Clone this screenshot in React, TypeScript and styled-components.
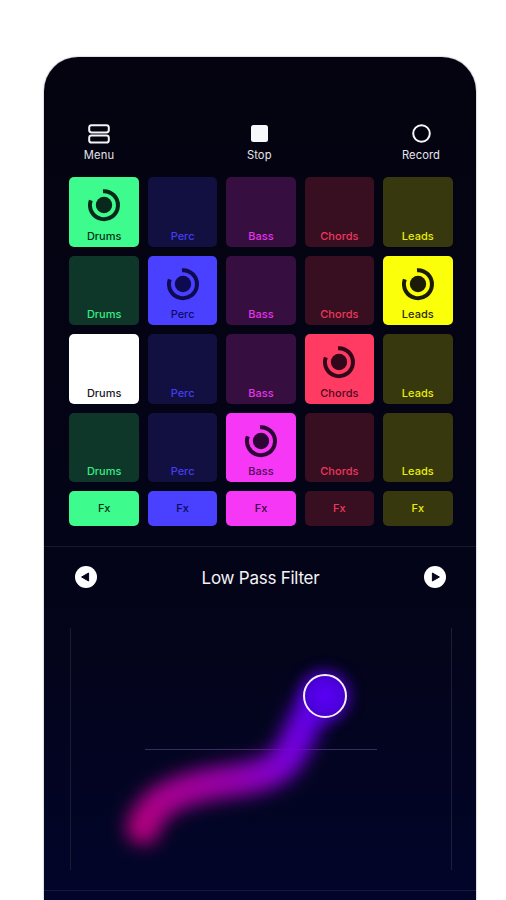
import React from "react";
import styled, { createGlobalStyle } from "styled-components";

const Global = createGlobalStyle`
  html, body { margin: 0; padding: 0; background: #fff; height: 900px; overflow: hidden; }
  #root { height: 900px; }
  * { box-sizing: border-box; }
`;

const Page = styled.div`
  width: 506px;
  height: 900px;
  padding: 57px 30px 0 44px;
  overflow: hidden;
  background: #fff;
  font-family: Inter, "Liberation Sans", sans-serif;
`;

const Phone = styled.div`
  width: 432px;
  height: 900px;
  border-radius: 34px 34px 0 0;
  background: linear-gradient(180deg, #04030f 0%, #04041a 65%, #02052a 94%);
  box-shadow: 0 0 1.5px rgba(70, 72, 110, 0.85);
  padding-top: 66px;
`;

const Toolbar = styled.div`
  display: grid;
  grid-template-columns: 60px 1fr 63px;
  padding: 0 23.5px 0 25px;
  height: 54.4px;
`;

const ToolButton = styled.div`
  display: flex;
  flex-direction: column;
  align-items: center;
  color: #e4e4ea;
  font-size: 11.2px;
  letter-spacing: 0.1px;
  line-height: 14px;
`;

const ToolIcon = styled.div`
  height: 21px;
  margin-bottom: 4px;
  display: flex;
  align-items: center;
  justify-content: center;
`;

const Grid = styled.div`
  display: grid;
  grid-template-columns: repeat(5, 69.6px);
  grid-template-rows: repeat(4, 69.6px) 35px;
  gap: 8.8px;
  padding-left: 25.4px;
`;

const Pad = styled.div<{ $color: string; $active: boolean; $text: string }>`
  position: relative;
  border-radius: 5px;
  display: flex;
  flex-direction: column;
  align-items: center;
  justify-content: flex-end;
  padding-bottom: 4px;
  font-size: 11px;
  font-weight: 500;
  line-height: 14px;
  color: ${(p) => (p.$active ? p.$text : `color-mix(in srgb, ${p.$color} 93%, #04031a)`)};
  background: ${(p) => (p.$active ? p.$color : `color-mix(in srgb, ${p.$color} 21%, #03030e)`)};
`;

const FxPad = styled(Pad)`
  justify-content: center;
  padding-bottom: 1px;
`;

const KnobSlot = styled.div`
  position: absolute;
  left: 50%;
  top: 10px;
  width: 36px;
  height: 36px;
  margin-left: -18px;
`;

const Divider = styled.div`
  height: 1px;
  margin-top: 20px;
  background: #191828;
`;

const NavRow = styled.div`
  display: flex;
  align-items: center;
  justify-content: space-between;
  height: 62px;
  padding: 0 30px 2px 31px;
`;

const NavTitle = styled.div`
  color: #f3f3f6;
  font-size: 17px;
  font-weight: 400;
  letter-spacing: -0.25px;
  padding-top: 3px;
`;

const XYPad = styled.div`
  position: relative;
  margin: 19px 24px 0 26px;
  height: 242px;
  border-left: 1px solid #1c1b33;
  border-right: 1px solid #1f1e38;
`;

const Trail = styled.svg`
  position: absolute;
  left: 0;
  top: 0;
  width: 382px;
  height: 243px;
  overflow: visible;
`;

const Crosshair = styled.div`
  position: absolute;
  left: 74px;
  top: 121px;
  width: 232px;
  height: 1px;
  background: rgba(130, 110, 190, 0.4);
`;

const Handle = styled.div`
  position: absolute;
  left: 232px;
  top: 46px;
  width: 44px;
  height: 44px;
  border-radius: 50%;
  border: 2px solid #f6eefc;
  background: radial-gradient(circle, #5a00f4 0%, #4f00e0 50%, #3c00b4 100%);
  box-shadow: 0 0 14px 4px rgba(90, 0, 230, 0.6);
`;

const BottomLine = styled.div`
  height: 1px;
  margin-top: 20px;
  background: #1a1a36;
`;

const C = {
  Drums: { color: "#3dfc8d", text: "#06301a", knob: "#07281a" },
  Perc: { color: "#4a40ff", text: "#100c66", knob: "#0e0a52" },
  Bass: { color: "#f637f5", text: "#4e0a55", knob: "#2e0635" },
  Chords: { color: "#ff3b63", text: "#4c0a1e", knob: "#33071a" },
  Leads: { color: "#fbff0a", text: "#2b2b08", knob: "#1c1c06" },
};

type Name = keyof typeof C;
const columns: Name[] = ["Drums", "Perc", "Bass", "Chords", "Leads"];

const knobs = new Set(["0-0", "1-1", "1-4", "2-3", "3-2"]);

function Knob({ color }: { color: string }) {
  return (
    <svg width="36" height="36" viewBox="0 0 36 36">
      <circle cx="18" cy="18" r="8.2" fill={color} />
      <path d="M17 4.2 A14 14 0 1 1 4.8 13.4" fill="none" stroke={color} strokeWidth="4" />
    </svg>
  );
}

function PadCell({ name, row, col }: { name: Name; row: number; col: number }) {
  const active = knobs.has(`${row}-${col}`);
  const white = row === 2 && col === 0;
  const { color, text, knob } = C[name];
  if (white) {
    return (
      <Pad $color="#ffffff" $active $text="#17171c">
        {name}
      </Pad>
    );
  }
  return (
    <Pad $color={color} $active={active} $text={text}>
      {active && (
        <KnobSlot>
          <Knob color={knob} />
        </KnobSlot>
      )}
      {name}
    </Pad>
  );
}

function NavButton({ dir }: { dir: "left" | "right" }) {
  return (
    <svg width="22" height="22" viewBox="0 0 22 22">
      <circle cx="11" cy="11" r="11" fill="#fff" />
      {dir === "left" ? (
        <path d="M6.6 11 L13.6 7 L13.6 15 Z" fill="#05041a" stroke="#05041a" strokeWidth="1" strokeLinejoin="round" />
      ) : (
        <path d="M15.4 11 L8.4 7 L8.4 15 Z" fill="#05041a" stroke="#05041a" strokeWidth="1" strokeLinejoin="round" />
      )}
    </svg>
  );
}

export default function App() {
  const fx: { name: Name; on: boolean }[] = [
    { name: "Drums", on: true },
    { name: "Perc", on: true },
    { name: "Bass", on: true },
    { name: "Chords", on: false },
    { name: "Leads", on: false },
  ];
  return (
    <Page>
      <Global />
      <Phone>
        <Toolbar>
          <ToolButton>
            <ToolIcon>
              <svg width="22" height="20" viewBox="0 0 22 20">
                <rect x="1.2" y="1.2" width="19.6" height="7.2" rx="2.4" fill="none" stroke="#f4f4f6" strokeWidth="2" />
                <rect x="1.2" y="11.4" width="19.6" height="7.2" rx="2.4" fill="none" stroke="#f4f4f6" strokeWidth="2" />
              </svg>
            </ToolIcon>
            Menu
          </ToolButton>
          <ToolButton>
            <ToolIcon>
              <svg width="17" height="17" viewBox="0 0 17 17">
                <rect x="0" y="0" width="17" height="17" rx="2.5" fill="#f8f8fa" />
              </svg>
            </ToolIcon>
            Stop
          </ToolButton>
          <ToolButton>
            <ToolIcon>
              <svg width="19" height="19" viewBox="0 0 19 19">
                <circle cx="9.5" cy="9.5" r="8.3" fill="none" stroke="#f8f8fa" strokeWidth="2" />
              </svg>
            </ToolIcon>
            Record
          </ToolButton>
        </Toolbar>
        <Grid>
          {[0, 1, 2, 3].map((r) =>
            columns.map((n, c) => <PadCell key={`${r}-${c}`} name={n} row={r} col={c} />)
          )}
          {fx.map((f) => (
            <FxPad key={f.name} $color={C[f.name].color} $active={f.on} $text={f.name === "Perc" ? "#0c0a50" : f.name === "Bass" ? "#3b0642" : "#06301a"}>
              Fx
            </FxPad>
          ))}
        </Grid>
        <Divider />
        <NavRow>
          <NavButton dir="left" />
          <NavTitle>Low Pass Filter</NavTitle>
          <NavButton dir="right" />
        </NavRow>
        <XYPad>
          <Crosshair />
          <Trail viewBox="0 0 382 243">
            <defs>
              <linearGradient id="trail" gradientUnits="userSpaceOnUse" x1="70" y1="205" x2="250" y2="70">
                <stop offset="0" stopColor="#b5007f" />
                <stop offset="0.45" stopColor="#9600a8" />
                <stop offset="0.72" stopColor="#7a00d8" />
                <stop offset="1" stopColor="#5a00f0" />
              </linearGradient>
              <filter id="soft" x="-30%" y="-30%" width="160%" height="160%">
                <feGaussianBlur stdDeviation="9" />
              </filter>
            </defs>
            <path
              d="M72 200 C80 175 100 165 130 158 C160 151 190 152 208 138 C228 122 228 92 252 68"
              fill="none"
              stroke="url(#trail)"
              strokeWidth="33"
              strokeLinecap="round"
              filter="url(#soft)"
            />
          </Trail>
          <Handle />
        </XYPad>
        <BottomLine />
      </Phone>
    </Page>
  );
}
